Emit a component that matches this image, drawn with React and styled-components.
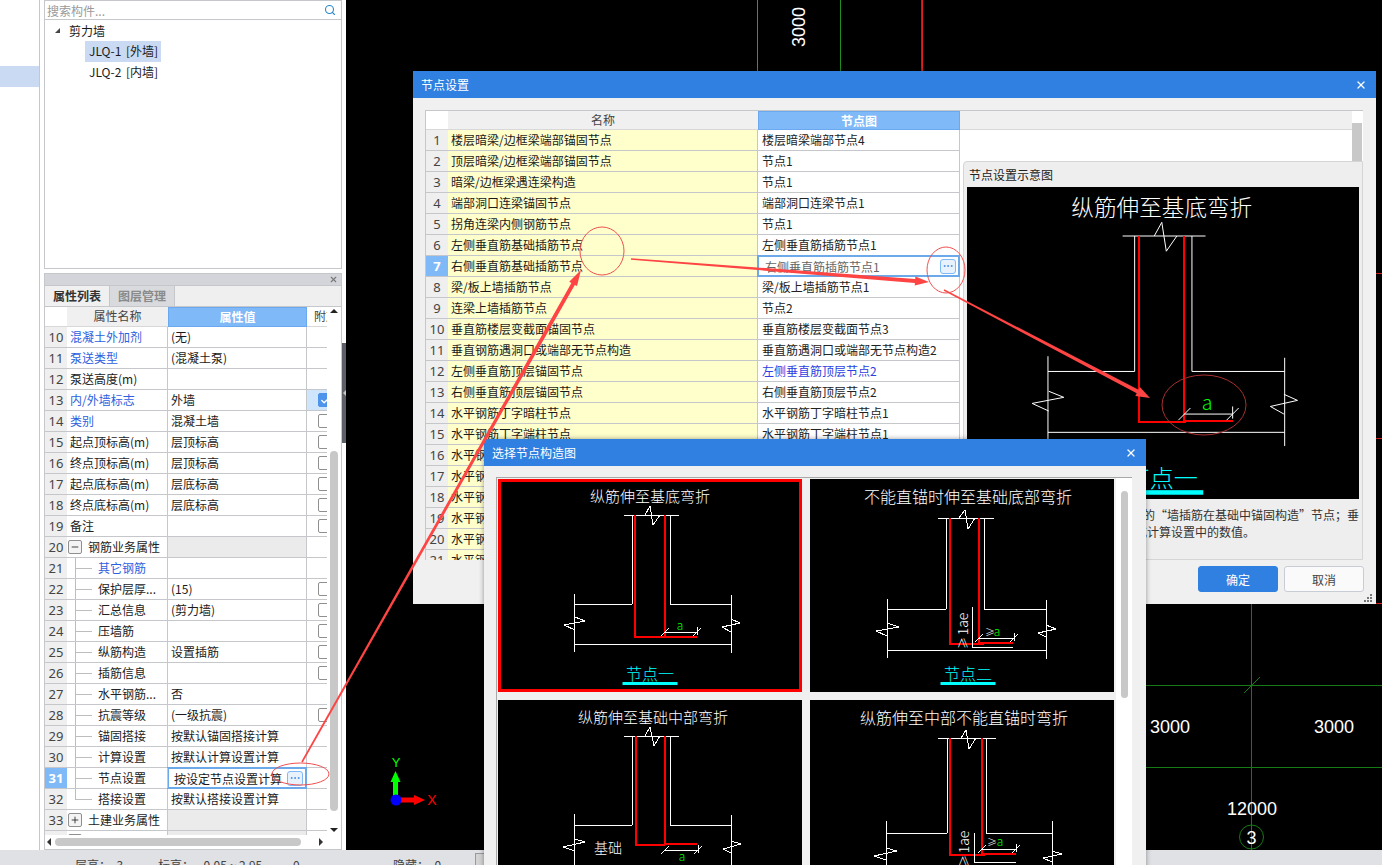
import React from 'react';
import styled, { createGlobalStyle } from 'styled-components';
import { Check, Ellipsis, Search, X, Minus, Plus } from 'lucide-react';

const Global = createGlobalStyle`
  html, body { margin: 0; padding: 0; background: #fff; overflow: hidden; }
  * { box-sizing: border-box; }
  body { font-family: "Noto Sans CJK SC", "Noto Sans", sans-serif; font-size: 12px; color: #1a1a1a; }
`;

const Desktop = styled.div`position: relative; width: 1382px; height: 865px; overflow: hidden; display: flex; flex-direction: column;`;
const Main = styled.div`flex: 0 0 850px; display: flex; min-height: 0;`;
const Sidebar = styled.aside`position: relative; flex: 0 0 346px; display: flex; background: #fff;`;
const NavRail = styled.nav`flex: 0 0 40px; border-right: 1px solid #c5c7cb; padding-top: 66px;`;
const NavItem = styled.div`height: 21px; background: #c9daf2;`;
const PanelColumn = styled.div`flex: 0 0 298px; margin-left: 4px; display: flex; flex-direction: column; gap: 4px;`;
const SplitHandle = styled.div`
  position: absolute; right: 0; top: 343px; width: 4px; height: 100px; background: #5d6066;
  &::after { content: ""; position: absolute; left: 1px; top: 47px; border: 3px solid transparent; border-right-color: #c8c8c8; border-left: 0; }
`;

const TreePanel = styled.section`flex: 0 0 269px; border: 1px solid #c5c7cb; background: #fff;`;
const SearchRow = styled.div`height: 19px; border-bottom: 1px solid #c5c7cb; display: flex; align-items: center; justify-content: space-between; padding: 0 5px 0 2px; color: #9a9a9a; line-height: 17px;`;
const TreeRoot = styled.div`height: 21px; line-height: 20px; display: flex; align-items: center; padding-left: 24px;
  &::before { content: ""; width: 0; height: 0; border-style: solid; border-width: 0 0 5px 5px; border-color: transparent transparent #444 transparent; margin-left: -14px; margin-right: 9px; }
`;
const TreeItem = styled.div`width: 76px; height: 21px; line-height: 20px; margin-left: 40px; padding: 0 0 0 4px; white-space: nowrap; word-spacing: 2px; background: ${p => (p.$selected ? '#c9daf2' : 'transparent')};`;

const PropsPanel = styled.section`flex: 1; min-height: 0; border: 1px solid #c5c7cb; background: #fff; display: flex; flex-direction: column; overflow: hidden;`;
const PanelBar = styled.div`flex: 0 0 11px; background: #d3d5da; display: flex; justify-content: flex-end; align-items: center; padding-right: 3px; color: #777;`;
const Tabs = styled.div`flex: 0 0 22px; background: #efefef; display: flex; border-top: 1px solid #c5c7cb; border-bottom: 1px solid #c5c7cb;`;
const Tab = styled.div`width: 65px; text-align: center; line-height: 20px; font-weight: 700; border-right: 1px solid #c5c7cb; color: ${p => (p.$active ? '#333' : '#8a8a8a')}; background: ${p => (p.$active ? '#f0f0f0' : '#d8dadd')};`;
const PropsBody = styled.div`flex: 1; min-height: 0; display: flex;`;
const PropsLeft = styled.div`flex: 0 0 282px; display: flex; flex-direction: column; min-width: 0;`;
const PropsTable = styled.div`flex: 0 0 528px; overflow: hidden;`;

const HeadCell = styled.div`
  text-align: center; line-height: 18px; overflow: hidden; white-space: nowrap; font-size: 12px;
  background: ${p => (p.$active ? '#7fb9f7' : p.$blank ? '#fff' : '#f0f0f0')};
  color: ${p => (p.$active ? '#fff' : '#444')};
  font-weight: ${p => (p.$active ? 700 : 400)};
  border-bottom: 1px solid ${p => (p.$active ? '#6aa9ef' : '#d8d8d8')};
  ${p => p.$active && 'border: 1px solid #6aa9ef;'}
  ${p => p.$clip && 'text-align: left; padding-left: 7px;'}
`;
const PropHeader = styled.div`display: grid; grid-template-columns: 22px 101px 139px 20px; height: 20px;`;
const PropRow = styled.div`display: grid; grid-template-columns: 22px 101px 139px 20px; height: 21px; border-bottom: 1px solid #c5c7cb;`;
const NumCell = styled.div`
  background: ${p => (p.$active ? '#7fb9f7' : '#efefef')}; color: ${p => (p.$active ? '#fff' : '#444')};
  font-weight: ${p => (p.$active ? 700 : 400)}; font-family: "Noto Sans", sans-serif; font-size: 13px; text-align: center; line-height: 20px;
`;
const NameCell = styled.div`
  position: relative; border-right: 1px solid #c5c7cb; line-height: 20px; white-space: nowrap; overflow: hidden;
  padding-left: ${p => (p.$tree ? '31px' : p.$group ? '21px' : '3px')}; color: ${p => (p.$link ? '#2d5fe0' : '#222')};
  ${p => p.$tree && `
    &::before { content: ""; position: absolute; left: 8px; top: -1px; bottom: ${p.$last ? '10px' : '-1px'}; width: 1px; background: #bdbdbd; }
    &::after { content: ""; position: absolute; left: 8px; top: 10px; width: 17px; height: 1px; background: #bdbdbd; }
  `}
`;
const ValueCell = styled.div`
  border-right: 1px solid #c5c7cb; line-height: 20px; padding-left: 3px; white-space: nowrap; overflow: hidden;
  ${p => p.$group && 'background: #ebebeb;'}
  ${p => p.$editing && `
    border: 2px solid #6ba9ea; margin: -1px 0 -1px -1px; line-height: 19px; padding-left: 5px; display: flex; align-items: center; justify-content: space-between; padding-right: 2px; background: #fff;
  `}
`;
const AttachCell = styled.div`padding: 3px 0 0 11px; overflow: hidden; background: ${p => (p.$checked ? '#cfe5fb' : 'transparent')};`;
const CheckBox = styled.span`
  display: flex; align-items: center; justify-content: center; width: 14px; height: 14px; border-radius: 2px;
  border: 1px solid ${p => (p.$on ? '#4d94ea' : '#8f8f8f')}; background: ${p => (p.$on ? '#4d94ea' : '#fff')}; color: #fff;
`;
const Toggle = styled.span`
  position: absolute; left: 1px; top: 3px; width: 14px; height: 14px; border: 1px solid #8f8f8f; border-radius: 2px; background: #f4f4f4;
  display: flex; align-items: center; justify-content: center; color: #222;
`;
const DotsButton = styled.span`
  flex: 0 0 16px; height: 15px; border: 1px solid #7fb9f7; border-radius: 3px; background: #e8f2fd; color: #4a90e2; display: flex; align-items: center; justify-content: center;
`;

const HScroll = styled.div`flex: 0 0 13px; position: relative; display: flex; align-items: center; justify-content: space-between; padding: 0 2px 0 2px;`;
const HThumb = styled.div`width: 246px; height: 8px; border-radius: 4px; background: #c8c8c8; margin-right: 16px;`;
const ArrowL = styled.span`width: 0; height: 0; border: 4px solid transparent; border-right: 4px solid #333; border-left: 0; margin-right: 1px;`;
const ArrowR = styled.span`width: 0; height: 0; border: 4px solid transparent; border-left: 4px solid #333; border-right: 0; margin-right: 2px;`;
const VScroll = styled.div`flex: 0 0 14px; display: flex; flex-direction: column; align-items: center; padding-top: 2px;`;
const ArrowU = styled.span`width: 0; height: 0; border: 4px solid transparent; border-bottom: 4px solid #222; border-top: 0;`;
const ArrowD = styled.span`width: 0; height: 0; border: 4px solid transparent; border-top: 4px solid #222; border-bottom: 0; margin-top: 17px;`;
const VThumb = styled.div`width: 8px; height: 360px; border-radius: 4px; background: #c8c8c8; margin-top: ${p => p.$top}px;`;

const Canvas = styled.main`flex: 1; min-width: 0; background: #000; overflow: hidden;`;
const CadSvg = styled.svg`display: block; width: 100%; height: 100%;`;

const StatusBar = styled.footer`flex: 0 0 15px; background: #e0e1e5; display: flex; padding: 6px 0 0 75px; color: #444; white-space: nowrap; overflow: hidden;`;
const StatusItem = styled.span`flex: 0 0 ${p => p.$w}px;`;
const StatusButton = styled.span`width: 10px; height: 14px; margin-top: -3px; background: #d3d3d3; border: 1px solid #9a9a9a;`;

const Dialog = styled.div`
  position: absolute; left: ${p => p.$x}px; top: ${p => p.$y}px; width: ${p => p.$w}px; height: ${p => p.$h}px;
  background: #f0f0f0; display: flex; flex-direction: column; box-shadow: 0 0 5px rgba(0,0,0,.4);
`;
const TitleBar = styled.header`flex: 0 0 27px; background: #2f80e0; color: #fff; display: flex; align-items: center; justify-content: space-between; padding: 0 9px 0 8px; font-size: 12px;`;
const DialogBody = styled.div`position: relative; flex: 1; min-height: 0; display: flex; flex-direction: column;`;

const NodeGrid = styled.div`flex: 0 0 450px; margin: 12px 13px 0 12px; border-top: 1px solid #c5c7cb; border-left: 1px solid #c5c7cb; background: #fff; overflow: hidden; display: flex;`;
const NodeTable = styled.div`flex: 0 0 534px;`;
const NodeHeader = styled.div`display: grid; grid-template-columns: 22px 310px 202px; height: 19px;`;
const NodeRow = styled.div`display: grid; grid-template-columns: 22px 310px 202px; height: 21px; border-bottom: 1px solid #c5c7cb;`;
const NodeName = styled.div`background: #ffffcc; border-right: 1px solid #c5c7cb; padding-left: 3px; line-height: 20px; white-space: nowrap; overflow: hidden;`;
const NodeValue = styled.div`
  border-right: 1px solid #c5c7cb; padding-left: 4px; line-height: 20px; white-space: nowrap; overflow: hidden; color: ${p => (p.$link ? '#2d3fe0' : '#222')};
  ${p => p.$editing && `
    border: 2px solid #6ba9ea; margin: -1px 0 -1px -1px; padding: 0 2px 0 6px; color: #666; display: flex; align-items: center; justify-content: space-between; line-height: 19px;
  `}
`;
const GridRest = styled.div`flex: 1; display: flex; min-width: 0;`;
const RestHeader = styled.div`flex: 1; height: 19px; background: #f0f0f0; border-bottom: 1px solid #d8d8d8;`;
const RestScroll = styled.div`flex: 0 0 10px; margin-right: 1px; padding-top: 12px;`;
const RestThumb = styled.div`height: 40px; background: #c8c8c8;`;

const PreviewPanel = styled.section`position: absolute; left: 550px; top: 63px; width: 400px; height: 399px; background: #eee; border: 1px solid #d5d5d5; border-top-left-radius: 4px; padding: 5px 3px 0 3px;`;
const PreviewLabel = styled.div`height: 20px; line-height: 16px; padding-left: 2px; color: #222;`;
const PreviewImage = styled.div`width: 392px; height: 312px; background: #000; margin-bottom: 7px;`;
const PreviewLine = styled.div`margin-left: ${p => p.$indent}px; line-height: 17px; white-space: nowrap; color: #333;`;
const DialogFooter = styled.div`flex: 1; display: flex; justify-content: flex-end; align-items: flex-start; gap: 6px; padding: 6px 12px 0 0;`;
const Button = styled.button`
  width: 80px; height: 26px; border-radius: 3px; font: inherit; font-size: 12px; padding: 0;
  border: 1px solid ${p => (p.$primary ? '#2f80e0' : '#c8ccd4')}; background: ${p => (p.$primary ? '#2f80e0' : '#fafafa')}; color: ${p => (p.$primary ? '#fff' : '#444')};
`;
const Grip = styled.svg`position: absolute; right: 4px; bottom: 2px;`;

const GalleryWrap = styled.div`flex: 1; min-height: 0; margin: 11px 14px 0 12px; display: flex; border-top: 1px solid #a8a8a8; border-left: 1px solid #a8a8a8; overflow: hidden;`;
const Gallery = styled.div`flex: 0 0 619px; padding: 1px 0 0 1px; display: grid; grid-template-columns: 304px 304px; gap: 8px; align-content: start;`;
const Thumb = styled.div`width: 304px; height: 213px; background: #000; ${p => p.$selected && 'outline: 3px solid #f00; outline-offset: -3px;'}`;
const GalleryScroll = styled.div`flex: 1; background: #fff; padding: 13px 4px 0 5px;`;
const GalleryThumb = styled.div`height: 207px; border-radius: 4px; background: #c8c8c8;`;

const DiagramSvg = styled.svg`
  display: block; width: 100%; height: 100%;
  line, polyline { vector-effect: non-scaling-stroke; fill: none; shape-rendering: crispEdges; }
  text { font-family: "Noto Sans CJK SC", sans-serif; font-weight: 300; }
`;
const AnnotationLayer = styled.svg`position: absolute; left: 0; top: 0; width: 1382px; height: 865px; pointer-events: none;`;

const props = [
  [10, '混凝土外加剂', '(无)', { link: 1 }],
  [11, '泵送类型', '(混凝土泵)', { link: 1 }],
  [12, '泵送高度(m)', '', {}],
  [13, '内/外墙标志', '外墙', { link: 1, on: 1 }],
  [14, '类别', '混凝土墙', { link: 1, cb: 1 }],
  [15, '起点顶标高(m)', '层顶标高', { cb: 1 }],
  [16, '终点顶标高(m)', '层顶标高', { cb: 1 }],
  [17, '起点底标高(m)', '层底标高', { cb: 1 }],
  [18, '终点底标高(m)', '层底标高', { cb: 1 }],
  [19, '备注', '', { cb: 1 }],
  [20, '钢筋业务属性', '', { group: 'minus' }],
  [21, '其它钢筋', '', { tree: 1, link: 1 }],
  [22, '保护层厚...', '(15)', { tree: 1, cb: 1 }],
  [23, '汇总信息', '(剪力墙)', { tree: 1, cb: 1 }],
  [24, '压墙筋', '', { tree: 1, cb: 1 }],
  [25, '纵筋构造', '设置插筋', { tree: 1, cb: 1 }],
  [26, '插筋信息', '', { tree: 1, cb: 1 }],
  [27, '水平钢筋...', '否', { tree: 1 }],
  [28, '抗震等级', '(一级抗震)', { tree: 1, cb: 1 }],
  [29, '锚固搭接', '按默认锚固搭接计算', { tree: 1 }],
  [30, '计算设置', '按默认计算设置计算', { tree: 1 }],
  [31, '节点设置', '按设定节点设置计算', { tree: 1, editing: 1 }],
  [32, '搭接设置', '按默认搭接设置计算', { tree: 1, last: 1 }],
  [33, '土建业务属性', '', { group: 'plus' }],
  [34, '', '', { group: 'plus' }],
];

const nodes = [
  ['楼层暗梁/边框梁端部锚固节点', '楼层暗梁端部节点4'],
  ['顶层暗梁/边框梁端部锚固节点', '节点1'],
  ['暗梁/边框梁遇连梁构造', '节点1'],
  ['端部洞口连梁锚固节点', '端部洞口连梁节点1'],
  ['拐角连梁内侧钢筋节点', '节点1'],
  ['左侧垂直筋基础插筋节点', '左侧垂直筋插筋节点1'],
  ['右侧垂直筋基础插筋节点', '右侧垂直筋插筋节点1', { editing: 1 }],
  ['梁/板上墙插筋节点', '梁/板上墙插筋节点1'],
  ['连梁上墙插筋节点', '节点2'],
  ['垂直筋楼层变截面锚固节点', '垂直筋楼层变截面节点3'],
  ['垂直钢筋遇洞口或端部无节点构造', '垂直筋遇洞口或端部无节点构造2'],
  ['左侧垂直筋顶层锚固节点', '左侧垂直筋顶层节点2', { link: 1 }],
  ['右侧垂直筋顶层锚固节点', '右侧垂直筋顶层节点2'],
  ['水平钢筋丁字暗柱节点', '水平钢筋丁字暗柱节点1'],
  ['水平钢筋丁字端柱节点', '水平钢筋丁字端柱节点1'],
  ['水平钢筋', ''], ['水平钢筋', ''], ['水平钢筋', ''], ['水平钢筋', ''], ['水平钢筋', ''], ['水平钢筋', ''],
];

const W = ({ x1, y1, x2, y2 }) => <line x1={x1} y1={y1} x2={x2} y2={y2} stroke="#fff" strokeWidth="1" />;

function Ticks({ x1, x2, y }) {
  return (
    <>
      <W x1={x1} y1={y} x2={x2} y2={y} />
      <W x1={x1 - 4} y1={y + 4} x2={x1 + 4} y2={y - 4} />
      <W x1={x2 - 4} y1={y + 4} x2={x2 + 4} y2={y - 4} />
      <W x1={x2} y1={y - 5} x2={x2} y2={y + 3} />
    </>
  );
}

function Diagram({ box, aspect, d, children }) {
  return (
    <DiagramSvg viewBox={box} preserveAspectRatio={aspect || 'xMidYMid meet'}>
      <text x={d.tx} y={d.ty} fill="#fff" fontSize={d.fs} textAnchor="middle">{d.title}</text>
      <W x1={d.top[1]} y1={d.top[0]} x2={d.top[2]} y2={d.top[0]} />
      <W x1={d.walls[0]} y1={d.top[0]} x2={d.walls[0]} y2={d.fy} />
      <W x1={d.walls[1]} y1={d.top[0]} x2={d.walls[1]} y2={d.fy} />
      <W x1={d.vl[0]} y1={d.fy} x2={d.walls[0]} y2={d.fy} />
      <W x1={d.walls[1]} y1={d.fy} x2={d.vr[0]} y2={d.fy} />
      <W x1={d.vl[0]} y1={d.vl[1]} x2={d.vl[0]} y2={d.vl[2]} />
      <W x1={d.vr[0]} y1={d.vr[1]} x2={d.vr[0]} y2={d.vr[2]} />
      {d.by && <W x1={d.vl[0]} y1={d.by} x2={d.vr[0]} y2={d.by} />}
      {d.breaks.map((b, i) => <polyline key={i} points={b} stroke="#fff" strokeWidth="1" />)}
      <polyline points={d.redL} stroke="#f00" strokeWidth="2" />
      <polyline points={d.redR} stroke="#f00" strokeWidth="2" />
      {children}
      {d.label && (
        <>
          <text x={d.label[0]} y={d.label[1]} fill="#0ff" fontSize="16" textAnchor="middle">{d.label[2]}</text>
          <rect x={d.label[0] - 27.5} y={d.label[1] + 2} width="55" height="3" fill="#0ff" />
        </>
      )}
    </DiagramSvg>
  );
}

const G = ({ x, y, size = 12, rotate, children, fill = '#0f0' }) => (
  <text x={x} y={y} fill={fill} fontSize={size} textAnchor="middle" transform={rotate ? `rotate(${rotate} ${x} ${y})` : undefined}>{children}</text>
);

const d1 = {
  title: '纵筋伸至基底弯折', tx: 650, ty: 502, fs: 15,
  top: [515, 624, 679], walls: [632, 670], fy: 604, vl: [574.5, 594, 652], vr: [731.5, 595, 653], by: 644,
  breaks: ['575,617 585,621 564,625 575,630', '731,619 740,623 722,627 731,632', '645,515 650,506 653,525 660,515'],
  redL: '635,515 635,637 666,637', redR: '665,515 665,636.5 697,636.5', label: [650, 680, '节点一'],
};
const d2 = {
  title: '不能直锚时伸至基础底部弯折', tx: 968, ty: 503, fs: 16,
  top: [518, 938, 994], walls: [946, 984], fy: 609, vl: [887, 599, 658], vr: [1046, 600, 659], by: 650,
  breaks: ['887,623 899,627 876,631 887,636', '1046,625 1056,629 1038,633 1046,637', '959,518 965,510 968,529 975,518'],
  redL: '950,518 950,644 984,644', redR: '979,518 979,643 1013,643', label: [968, 680, '节点二'],
};
const d3 = {
  title: '纵筋伸至基础中部弯折', tx: 653, ty: 723, fs: 15,
  top: [736, 624, 679], walls: [632, 670], fy: 825, vl: [574.5, 814, 913], vr: [731.5, 815, 913],
  breaks: ['575,839 585,842 563,847 575,851', '731,841 741,844 723,849 731,853', '645,736 650,727 654,746 660,736'],
  redL: '636,736 636,845 665,845', redR: '665,736 665,844 697,844',
};
const d4 = {
  title: '纵筋伸至中部不能直锚时弯折', tx: 964, ty: 724, fs: 16,
  top: [738, 938, 996], walls: [947, 986], fy: 833, vl: [886, 821, 913], vr: [1052, 821, 913],
  breaks: ['886,848 897,851 874,856 886,860', '1052,851 1062,854 1043,858 1052,862', '961,738 966,730 969,749 976,738'],
  redL: '950,738 950,855 985,855', redR: '982,738 982,854 1016,854',
};

function arrow(x1, y1, x2, y2, tail, neck, head, len) {
  const dx = x2 - x1, dy = y2 - y1, L = Math.hypot(dx, dy);
  const ux = dx / L, uy = dy / L, nx = -uy, ny = ux;
  const bx = x2 - ux * len, by = y2 - uy * len;
  const p = (x, y) => `${x.toFixed(1)},${y.toFixed(1)}`;
  return [
    p(x1 + nx * tail / 2, y1 + ny * tail / 2), p(bx + nx * neck / 2, by + ny * neck / 2), p(bx + nx * head / 2, by + ny * head / 2),
    p(x2, y2),
    p(bx - nx * head / 2, by - ny * head / 2), p(bx - nx * neck / 2, by - ny * neck / 2), p(x1 - nx * tail / 2, y1 - ny * tail / 2),
  ].join(' ');
}

export default function App() {
  return (
    <Desktop>
      <Global />
      <Main>
        <Sidebar>
          <NavRail><NavItem /></NavRail>
          <PanelColumn>
            <TreePanel>
              <SearchRow>搜索构件...<Search size={12} color="#2a86c8" strokeWidth={2.2} /></SearchRow>
              <TreeRoot>剪力墙</TreeRoot>
              <TreeItem $selected>JLQ-1 [外墙]</TreeItem>
              <TreeItem>JLQ-2 [内墙]</TreeItem>
            </TreePanel>
            <PropsPanel>
              <PanelBar><X size={9} strokeWidth={3} /></PanelBar>
              <Tabs><Tab $active>属性列表</Tab><Tab>图层管理</Tab></Tabs>
              <PropsBody>
                <PropsLeft>
                  <PropsTable>
                    <PropHeader>
                      <HeadCell $blank />
                      <HeadCell>属性名称</HeadCell>
                      <HeadCell $active>属性值</HeadCell>
                      <HeadCell $blank $clip>附加</HeadCell>
                    </PropHeader>
                    {props.map(([n, name, value, o]) => (
                      <PropRow key={n}>
                        <NumCell $active={o.editing}>{n}</NumCell>
                        <NameCell $link={o.link} $tree={o.tree} $last={o.last} $group={o.group}>
                          {o.group && <Toggle>{o.group === 'minus' ? <Minus size={10} /> : <Plus size={10} />}</Toggle>}
                          {name}
                        </NameCell>
                        <ValueCell $group={o.group} $editing={o.editing}>
                          {value}
                          {o.editing && <DotsButton><Ellipsis size={12} /></DotsButton>}
                        </ValueCell>
                        <AttachCell $checked={o.on}>
                          {(o.cb || o.on) && <CheckBox $on={o.on}>{o.on && <Check size={11} strokeWidth={3} />}</CheckBox>}
                        </AttachCell>
                      </PropRow>
                    ))}
                  </PropsTable>
                  <HScroll><ArrowL /><HThumb /><ArrowR /></HScroll>
                </PropsLeft>
                <VScroll>
                  <ArrowU />
                  <VThumb $top={138} />
                  <ArrowD />
                </VScroll>
              </PropsBody>
            </PropsPanel>
          </PanelColumn>
          <SplitHandle />
        </Sidebar>
        <Canvas>
          <CadSvg viewBox="346 0 1036 850">
            <line x1="757.5" y1="0" x2="757.5" y2="71" stroke="#6e6e6e" />
            <line x1="840.5" y1="0" x2="840.5" y2="71" stroke="#1f8f1f" />
            <line x1="921.5" y1="0" x2="921.5" y2="71" stroke="#3a3ad0" />
            <line x1="922.5" y1="0" x2="922.5" y2="71" stroke="#e02020" />
            <text x="805" y="47" fill="#fff" fontSize="18" fontFamily='"Liberation Sans", sans-serif' transform="rotate(-90 805 47)">3000</text>
            <line x1="1251.5" y1="604" x2="1251.5" y2="850" stroke="#167a16" />
            <line x1="1146" y1="685.5" x2="1382" y2="685.5" stroke="#167a16" />
            <line x1="1146" y1="767.5" x2="1382" y2="767.5" stroke="#167a16" />
            <line x1="1244" y1="693" x2="1260" y2="677" stroke="#167a16" />
            <text x="1150" y="733" fill="#fff" fontSize="18" fontFamily='"Liberation Sans", sans-serif'>3000</text>
            <text x="1314" y="733" fill="#fff" fontSize="18" fontFamily='"Liberation Sans", sans-serif'>3000</text>
            <text x="1227" y="815" fill="#fff" fontSize="18" fontFamily='"Liberation Sans", sans-serif'>12000</text>
            <circle cx="1251.5" cy="837" r="12" fill="none" stroke="#167a16" />
            <text x="1251.5" y="844" fill="#fff" fontSize="18" textAnchor="middle" fontFamily='"Liberation Sans", sans-serif'>3</text>
            <line x1="1376" y1="273.5" x2="1382" y2="273.5" stroke="#e02020" />
            <line x1="1376" y1="438.5" x2="1382" y2="438.5" stroke="#e02020" />
            <line x1="1376" y1="603.5" x2="1382" y2="603.5" stroke="#e02020" />
            <rect x="393" y="780" width="5" height="20" fill="#0f0" />
            <polygon points="395.5,771 390.5,782 400.5,782" fill="#0f0" />
            <rect x="396" y="797.5" width="20" height="5" fill="#f00" />
            <polygon points="425,800 414,795 414,805" fill="#f00" />
            <circle cx="396" cy="800" r="5.5" fill="#00f" />
            <text x="396" y="767" fill="#0f0" fontSize="13" textAnchor="middle" fontFamily='"Liberation Sans", sans-serif'>Y</text>
            <text x="432" y="805" fill="#f00" fontSize="14" textAnchor="middle" fontFamily='"Liberation Sans", sans-serif'>X</text>
          </CadSvg>
        </Canvas>
      </Main>
      <StatusBar>
        <StatusItem $w={83}>层高：&nbsp; 3</StatusItem>
        <StatusItem $w={135}>标高：&nbsp; -0.05 ~ 2.95</StatusItem>
        <StatusItem $w={100}>0</StatusItem>
        <StatusItem $w={82}>隐藏：&nbsp; 0</StatusItem>
        <StatusButton />
      </StatusBar>

      <Dialog $x={413} $y={71} $w={963} $h={533}>
        <TitleBar>节点设置<X size={12} strokeWidth={2.5} /></TitleBar>
        <DialogBody>
          <NodeGrid>
            <NodeTable>
              <NodeHeader>
                <HeadCell $blank />
                <HeadCell>名称</HeadCell>
                <HeadCell $active>节点图</HeadCell>
              </NodeHeader>
              {nodes.map(([name, value, o = {}], i) => (
                <NodeRow key={i}>
                  <NumCell $active={o.editing}>{i + 1}</NumCell>
                  <NodeName>{name}</NodeName>
                  <NodeValue $link={o.link} $editing={o.editing}>
                    {value}
                    {o.editing && <DotsButton><Ellipsis size={12} /></DotsButton>}
                  </NodeValue>
                </NodeRow>
              ))}
            </NodeTable>
            <GridRest>
              <RestHeader />
              <RestScroll><RestThumb /></RestScroll>
            </GridRest>
          </NodeGrid>
          <PreviewPanel>
            <PreviewLabel>节点设置示意图</PreviewLabel>
            <PreviewImage>
              <Diagram box="520.8 482.8 260 205" aspect="none" d={d1}>
                <Ticks x1={665} x2={697} y={632} />
                <G x={680} y={629} size={13}>a</G>
              </Diagram>
            </PreviewImage>
            <PreviewLine $indent={176}>的“墙插筋在基础中锚固构造”节点；垂</PreviewLine>
            <PreviewLine $indent={168}>或计算设置中的数值。</PreviewLine>
          </PreviewPanel>
          <DialogFooter>
            <Button $primary>确定</Button>
            <Button>取消</Button>
          </DialogFooter>
          <Grip width="8" height="8" viewBox="0 0 8 8" fill="#777">
            <rect x="6" y="0" width="2" height="2" /><rect x="3" y="3" width="2" height="2" /><rect x="6" y="3" width="2" height="2" />
            <rect x="0" y="6" width="2" height="2" /><rect x="3" y="6" width="2" height="2" /><rect x="6" y="6" width="2" height="2" />
          </Grip>
        </DialogBody>
      </Dialog>

      <Dialog $x={484} $y={439} $w={662} $h={430}>
        <TitleBar>选择节点构造图<X size={12} strokeWidth={2.5} /></TitleBar>
        <DialogBody>
          <GalleryWrap>
            <Gallery>
              <Thumb $selected>
                <Diagram box="498 479 304 213" d={d1}>
                  <Ticks x1={665} x2={697} y={632} />
                  <G x={680} y={630} size={12}>a</G>
                </Diagram>
              </Thumb>
              <Thumb>
                <Diagram box="810 479 304 213" d={d2}>
                  <Ticks x1={979} x2={1014} y={638} />
                  <W x1={972} y1={607} x2={972} y2={647} />
                  <W x1={972} y1={647} x2={1013} y2={647} />
                  <G x={968} y={624} size={14} rotate={-90} fill="#fff">1ae</G>
                  <G x={968} y={643} size={12} rotate={-90} fill="#fff">≥</G>
                  <G x={990} y={636} size={10} fill="#fff">≥</G>
                  <G x={997} y={636} size={12}>a</G>
                </Diagram>
              </Thumb>
              <Thumb>
                <Diagram box="498 700 304 213" d={d3}>
                  <Ticks x1={665} x2={698} y={850} />
                  <G x={682} y={861} size={12}>a</G>
                  <G x={608} y={853} size={14} fill="#fff">基础</G>
                </Diagram>
              </Thumb>
              <Thumb>
                <Diagram box="810 700 304 213" d={d4}>
                  <Ticks x1={982} x2={1016} y={849} />
                  <W x1={974} y1={833} x2={974} y2={862} />
                  <W x1={974} y1={862} x2={1016} y2={862} />
                  <G x={969} y={842} size={14} rotate={-90} fill="#fff">1ae</G>
                  <G x={969} y={861} size={12} rotate={-90} fill="#fff">≥</G>
                  <G x={992} y={846} size={10} fill="#fff">≥</G>
                  <G x={1000} y={846} size={12}>a</G>
                </Diagram>
              </Thumb>
            </Gallery>
            <GalleryScroll><GalleryThumb /></GalleryScroll>
          </GalleryWrap>
        </DialogBody>
      </Dialog>

      <AnnotationLayer viewBox="0 0 1382 865">
        <g fill="#ff4444">
          <polygon points={arrow(302, 762, 581, 270, 1.5, 4, 9, 16)} />
          <polygon points={arrow(631, 259, 929, 282, 1.5, 4, 9, 14)} />
          <polygon points={arrow(944, 290, 1150, 398, 1.5, 4, 10, 14)} />
        </g>
        <g fill="none" stroke="#f05050" strokeWidth="1">
          <ellipse cx="300.5" cy="774" rx="28.5" ry="11" />
          <ellipse cx="602" cy="251" rx="22" ry="24" />
          <ellipse cx="946" cy="270" rx="19" ry="23" />
          <ellipse cx="1204" cy="405" rx="42" ry="30" stroke="#a83030" />
        </g>
      </AnnotationLayer>
    </Desktop>
  );
}
